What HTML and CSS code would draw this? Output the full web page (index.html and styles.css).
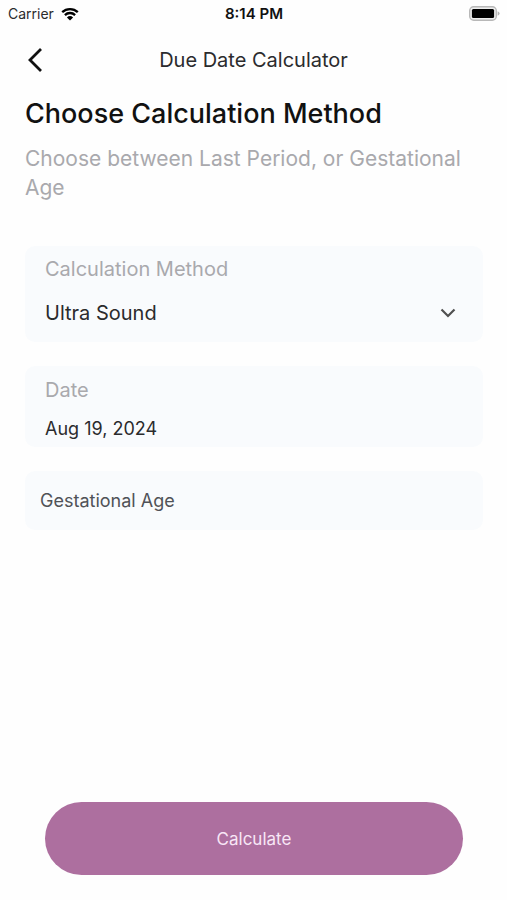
FILE: index.html
```html
<!DOCTYPE html>
<html lang="en">
<head>
<meta charset="utf-8">
<meta name="viewport" content="width=device-width, initial-scale=1">
<title>Due Date Calculator</title>
<link rel="stylesheet" href="styles.css">
</head>
<body>
<div class="status">
  <div class="carrier">
    <span>Carrier</span>
    <svg class="wifi" viewBox="0 0 18 14" aria-hidden="true">
      <path d="M1.2 5.2a11.2 11.2 0 0 1 15.600 0M3.900 8.100a7.300 7.300 0 0 1 10.200 0" fill="none" stroke="#000" stroke-width="2.300"/>
      <path d="M9 13.600 5.900 10.500a4.500 4.500 0 0 1 6.200 0z" fill="#000"/>
    </svg>
  </div>
  <span class="clock">8:14 PM</span>
  <svg class="battery" viewBox="0 0 31 15" aria-hidden="true">
    <rect x=".7" y=".7" width="26.600" height="13.600" rx="4" fill="#eee" stroke="#b8b8b8" stroke-width="1.400"/>
    <rect x="2.900" y="2.900" width="22.200" height="9.200" rx="1.500" fill="#000"/>
    <path d="M28.600 5.200q2 .8 2 2.300t-2 2.300z" fill="#b4b4b4"/>
  </svg>
</div>
<header class="appbar">
  <button class="back" type="button" aria-label="Back">
    <svg viewBox="0 0 16 26" aria-hidden="true"><path d="M14 2 3 13l11 11" fill="none" stroke="#111" stroke-width="2.800"/></svg>
  </button>
  <span class="screen-title">Due Date Calculator</span>
</header>
<main class="content">
  <h1>Choose Calculation Method</h1>
  <p class="intro">Choose between Last Period, or Gestational Age</p>
  <form class="form">
    <div class="card method">
      <label for="method">Calculation Method</label>
      <div class="picker">
        <select id="method"><option>Ultra Sound</option></select>
        <svg class="chevron" viewBox="0 0 16 10" aria-hidden="true"><path d="m1.500 1.500 6.500 6.500 6.500-6.500" fill="none" stroke="#505050" stroke-width="2.200"/></svg>
      </div>
    </div>
    <div class="card date">
      <label for="date">Date</label>
      <input id="date" type="text" value="Aug 19, 2024">
    </div>
    <input class="card age" type="text" placeholder="Gestational Age" aria-label="Gestational Age">
    <button class="submit" type="button">Calculate</button>
  </form>
</main>
</body>
</html>
```
FILE: styles.css
```css
* {
  box-sizing: border-box;
}

body {
  margin: 0;
  min-height: 100vh;
  display: flex;
  flex-direction: column;
  background: #fefefe;
  color: #2b2b2d;
  font-family: Inter, "Liberation Sans", sans-serif;
}

button,
input,
select {
  border: 0;
  padding: 0;
  background: none;
  color: inherit;
  font: inherit;
}

.status {
  display: grid;
  grid-template-columns: 1fr auto 1fr;
  align-items: center;
  height: 27px;
  padding: 0 7px 0 8px;
  font-size: 14px;
}

.carrier {
  display: flex;
  align-items: center;
  gap: 7px;
}

.wifi {
  width: 18px;
  height: 14px;
}

.clock {
  color: #111;
  font-size: 15px;
  font-weight: 600;
}

.battery {
  width: 31px;
  height: 15px;
  justify-self: end;
}

.appbar {
  display: grid;
  grid-template-columns: 1fr auto 1fr;
  align-items: center;
  height: 65px;
  padding: 0 27px;
}

.back {
  width: 18px;
  height: 26px;
}

.back svg {
  display: block;
  width: 16px;
  height: 26px;
}

.screen-title {
  font-size: 20px;
}

.content {
  flex: 1;
  display: flex;
  flex-direction: column;
  padding: 6px 24px 25px 25px;
}

h1 {
  margin: 0 0 14px;
  color: #111;
  font-size: 27px;
  font-weight: 500;
  line-height: 32px;
}

.intro {
  margin: 0 0 44px;
  color: #a9a9ad;
  font-size: 21px;
  line-height: 29px;
}

.form {
  flex: 1;
  display: flex;
  flex-direction: column;
  gap: 24px;
}

.card {
  display: flex;
  flex-direction: column;
  border-radius: 10px;
  background: #f9fbfd;
}

.card label {
  color: #a9a9ad;
  font-size: 20px;
  line-height: 24px;
}

.method {
  gap: 16px;
  padding: 11px 20px 13px;
}

.picker {
  display: grid;
  grid-template-columns: 1fr auto;
  align-items: center;
}

.picker select {
  grid-area: 1 / 1 / 2 / 3;
  height: 32px;
  appearance: none;
  font-size: 20px;
}

.chevron {
  grid-area: 1 / 2;
  width: 16px;
  height: 10px;
  margin-right: 7px;
  pointer-events: none;
}

.date {
  gap: 14px;
  padding: 12px 20px 7px;
}

.date input {
  height: 24px;
  font-size: 18px;
}

.age {
  width: 100%;
  height: 59px;
  padding: 0 15px;
  font-size: 18px;
}

.age::placeholder {
  color: #505257;
  opacity: 1;
}

.submit {
  height: 73px;
  margin: auto 20px 0;
  border-radius: 37px;
  background: #ad6f9f;
  color: #f8e6f6;
  font-size: 17px;
}
```
